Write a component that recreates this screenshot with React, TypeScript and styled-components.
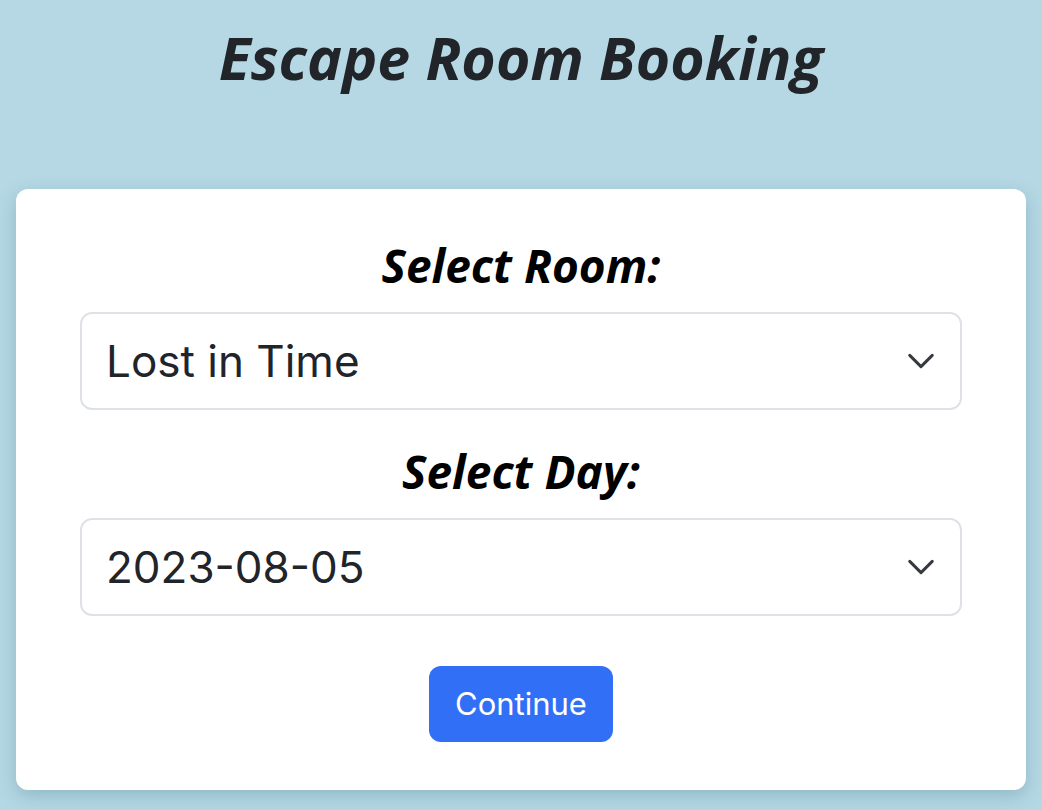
import React, { useState } from 'react';
import styled, { createGlobalStyle } from 'styled-components';

const GlobalStyle = createGlobalStyle`
  html, body {
    margin: 0;
    padding: 0;
    background-color: #b5d8e4;
  }
  body {
    font-family: Inter, "Liberation Sans", sans-serif;
    color: #212529;
  }
`;

const Page = styled.div`
  min-height: 810px;
  padding: 22px 16px 20px;
  box-sizing: border-box;
`;

const Title = styled.h1`
  margin: 0 0 96px;
  text-align: center;
  font-family: "Open Sans", sans-serif;
  font-style: italic;
  font-weight: 700;
  font-size: 59px;
  line-height: 1.2;
  color: #212529;
`;

const Card = styled.form`
  background-color: #ffffff;
  border-radius: 12px;
  box-shadow: 0 6px 18px rgba(40, 90, 110, 0.25);
  padding: 48px 64px;
  display: flex;
  flex-direction: column;
  align-items: stretch;
`;

const Label = styled.label`
  display: block;
  text-align: center;
  font-family: "Open Sans", sans-serif;
  font-style: italic;
  font-weight: 700;
  font-size: 46px;
  line-height: 56px;
  color: #000000;
  margin-bottom: 19px;
`;

const Field = styled.div<{ $gap?: number }>`
  position: relative;
  margin-bottom: ${p => p.$gap ?? 0}px;
`;

const Select = styled.select`
  appearance: none;
  -webkit-appearance: none;
  width: 100%;
  height: 98px;
  box-sizing: border-box;
  padding: 0 80px 0 24px;
  font-family: Inter, "Liberation Sans", sans-serif;
  font-size: 44px;
  color: #212529;
  background-color: #ffffff;
  border: 2px solid #dee2e6;
  border-radius: 12px;
  outline: none;
`;

const Chevron = styled.svg`
  position: absolute;
  right: 26px;
  top: 50%;
  width: 30px;
  height: 30px;
  margin-top: -15px;
  pointer-events: none;
`;

const Actions = styled.div`
  display: flex;
  justify-content: center;
`;

const Button = styled.button`
  height: 76px;
  padding: 0 26px;
  border: none;
  border-radius: 12px;
  background-color: #316ff6;
  color: #ffffff;
  font-family: Inter, "Liberation Sans", sans-serif;
  font-size: 31px;
  cursor: pointer;
`;

const ChevronIcon = () => (
  <Chevron viewBox="0 0 16 16" aria-hidden="true">
    <path
      d="M2 5l6 6 6-6"
      fill="none"
      stroke="#343a40"
      strokeWidth="1.6"
      strokeLinecap="round"
      strokeLinejoin="round"
    />
  </Chevron>
);

const rooms = ['Lost in Time', 'The Vault', 'Haunted Manor'];
const days = ['2023-08-05', '2023-08-06', '2023-08-07'];

const App = () => {
  const [room, setRoom] = useState(rooms[0]);
  const [day, setDay] = useState(days[0]);

  return (
    <>
      <GlobalStyle />
      <Page>
        <Title>Escape Room Booking</Title>
        <Card onSubmit={e => e.preventDefault()}>
          <Label htmlFor="room">Select Room:</Label>
          <Field $gap={33}>
            <Select id="room" value={room} onChange={e => setRoom(e.target.value)}>
              {rooms.map(r => (
                <option key={r} value={r}>{r}</option>
              ))}
            </Select>
            <ChevronIcon />
          </Field>
          <Label htmlFor="day">Select Day:</Label>
          <Field $gap={50}>
            <Select id="day" value={day} onChange={e => setDay(e.target.value)}>
              {days.map(d => (
                <option key={d} value={d}>{d}</option>
              ))}
            </Select>
            <ChevronIcon />
          </Field>
          <Actions>
            <Button type="submit">Continue</Button>
          </Actions>
        </Card>
      </Page>
    </>
  );
};

export default App;
